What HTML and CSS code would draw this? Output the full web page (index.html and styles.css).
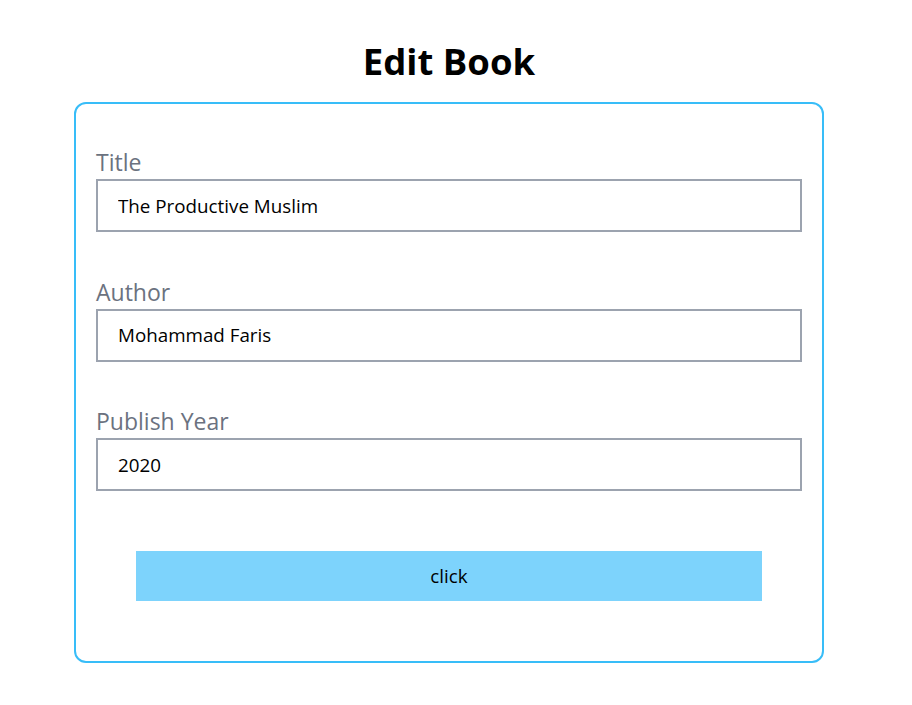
FILE: index.html
```html
<!DOCTYPE html>
<html lang="en">
<head>
<meta charset="utf-8">
<title>Edit Book</title>
<link rel="stylesheet" href="styles.css">
</head>
<body>
<div class="page">
  <h1 class="title">Edit Book</h1>
  <div class="card">
    <div class="field">
      <label class="label" for="title">Title</label>
      <input class="input" id="title" type="text" value="The Productive Muslim">
    </div>
    <div class="field">
      <label class="label" for="author">Author</label>
      <input class="input" id="author" type="text" value="Mohammad Faris">
    </div>
    <div class="field">
      <label class="label" for="year">Publish Year</label>
      <input class="input" id="year" type="text" value="2020">
    </div>
    <button class="btn" type="button">click</button>
  </div>
</div>
</body>
</html>
```

FILE: styles.css
```css
* { box-sizing: border-box; }
html, body { margin: 0; padding: 0; background: #fff; }
body {
  font-family: "Open Sans", "Noto Sans", sans-serif;
  color: #000;
}
.page {
  width: 898px;
  padding: 39px 0 20px;
  display: flex;
  flex-direction: column;
  align-items: center;
}
.title {
  margin: 0 0 18px;
  font-size: 36.5px;
  line-height: 45px;
  font-weight: 700;
  text-align: center;
}
.card {
  width: 750px;
  border: 2px solid #38bdf8;
  border-radius: 12px;
  padding: 20px;
  display: flex;
  flex-direction: column;
}
.field {
  margin: 20px 0 21.5px;
  display: flex;
  flex-direction: column;
}
.label {
  font-size: 23px;
  line-height: 33px;
  padding-top: 2px;
  color: #6b7280;
}
.input {
  display: block;
  width: 100%;
  height: 53px;
  border: 2px solid #9ca3af;
  padding: 0 20px;
  font-family: inherit;
  font-size: 18.8px;
  color: #000;
  outline: none;
  background: #fff;
}
.btn {
  margin: 38.5px 40px 40px;
  height: 50px;
  border: 0;
  background: #7dd3fc;
  font-family: inherit;
  font-size: 18.8px;
  color: #000;
  cursor: pointer;
}
```
